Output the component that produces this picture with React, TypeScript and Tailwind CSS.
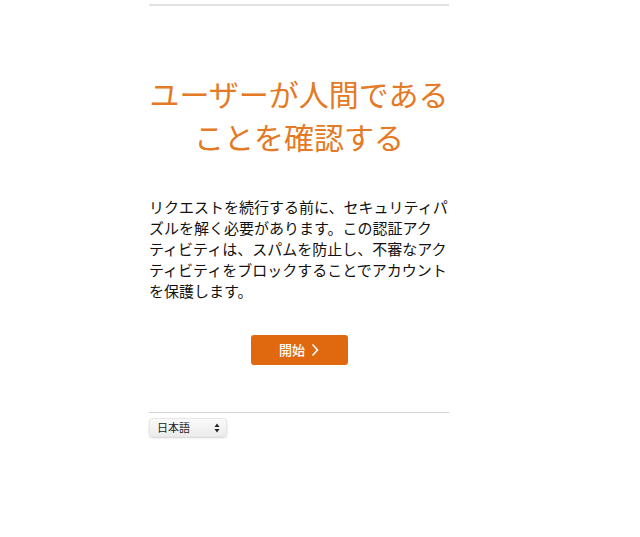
const FONT = '[font-family:"Noto_Sans_CJK_JP","Noto_Sans",sans-serif]';

export default function App() {
  return (
    <div className={`min-h-screen bg-white ${FONT}`}>
      <div className="ml-[149px] w-[300px] pt-[4px]">
        <div className="border-t-2 border-[#e2e2e2]" />

        {/* Title */}
        <h1 className="mt-[66px] text-center text-[30px] leading-[43px] font-normal text-[#e47a25]">
          ユーザーが人間である
          <br />
          ことを確認する
        </h1>

        {/* Description */}
        <p className="mt-[38px] text-[15px] leading-[21px] text-[#111]">
          リクエストを続行する前に、セキュリティパ
          <br />
          ズルを解く必要があります。この認証アク
          <br />
          ティビティは、スパムを防止し、不審なアク
          <br />
          ティビティをブロックすることでアカウント
          <br />
          を保護します。
        </p>

        <div className="mt-[34px] flex justify-center">
          <button className="flex h-[30px] w-[97px] items-center justify-center gap-[6px] rounded-[3px] bg-[#e0690f] text-[13px] font-medium text-white">
            開始
            <svg width="8" height="14" viewBox="0 0 8 14" fill="none">
              <path d="M1.5 1.5 6.5 7 1.5 12.5" stroke="white" strokeWidth="1.6" />
            </svg>
          </button>
        </div>

        <div className="mt-[47px] border-t border-[#d4d4d4]" />

        <div className="mt-[5px]">
          <div className="flex h-[19px] w-[78px] items-center justify-between rounded-[4px] border border-[#e6e6e6] bg-gradient-to-b from-[#fafafa] to-[#ececec] pl-[7px] pr-[6px] text-[11px] text-[#222] shadow-[0_1px_2px_rgba(0,0,0,0.18)]">
            日本語
            <svg width="6" height="10" viewBox="0 0 6 10">
              <path d="M3 0.5 5.5 4H0.5Z M3 9.5 5.5 6H0.5Z" fill="#222" />
            </svg>
          </div>
        </div>
      </div>
    </div>
  );
}
